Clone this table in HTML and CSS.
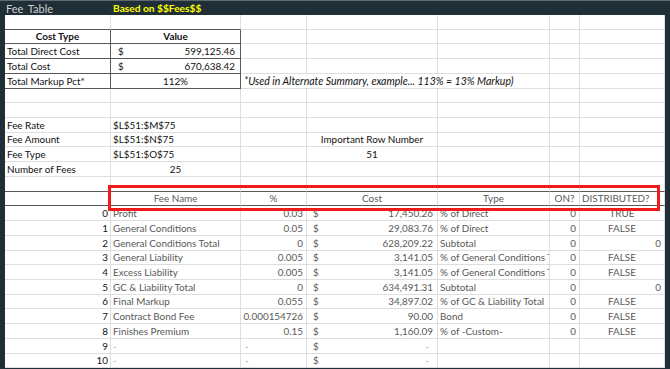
FILE: index.html
```html
<!DOCTYPE html>
<html>
<head>
<meta charset="utf-8">
<link rel="stylesheet" href="styles.css">
</head>
<body>
<div class="topbar"><span class="title">Fee Table</span><span class="based">Based on $$Fees$$</span></div>
<div class="frame">
<div class="sheet">
  <div class="row"><div class="c bbd"></div><div class="c bbd"></div><div class="c"></div><div class="c"></div><div class="c"></div><div class="c"></div><div class="c"></div></div>
  <div class="row"><div class="c box ctr b">Cost Type</div><div class="c box ctr b">Value</div><div class="c"></div><div class="c"></div><div class="c"></div><div class="c"></div><div class="c"></div></div>
  <div class="row"><div class="c box">Total Direct Cost</div><div class="c box money mb"><span>$</span><span>599,125.46</span></div><div class="c"></div><div class="c"></div><div class="c"></div><div class="c"></div><div class="c"></div></div>
  <div class="row"><div class="c box">Total Cost</div><div class="c box money mb"><span>$</span><span>670,638.42</span></div><div class="c"></div><div class="c"></div><div class="c"></div><div class="c"></div><div class="c"></div></div>
  <div class="row"><div class="c box">Total Markup Pct*</div><div class="c box ctr">112%</div><div class="c span3 it">*Used in Alternate Summary, example... 113% = 13% Markup)</div><div class="c"></div><div class="c"></div></div>
  <div class="row"><div class="c"></div><div class="c"></div><div class="c"></div><div class="c"></div><div class="c"></div><div class="c"></div><div class="c"></div></div>
  <div class="row"><div class="c"></div><div class="c"></div><div class="c"></div><div class="c"></div><div class="c"></div><div class="c"></div><div class="c"></div></div>
  <div class="row"><div class="c">Fee Rate</div><div class="c">$L$51:$M$75</div><div class="c"></div><div class="c"></div><div class="c"></div><div class="c"></div><div class="c"></div></div>
  <div class="row"><div class="c">Fee Amount</div><div class="c">$L$51:$N$75</div><div class="c"></div><div class="c ctr">Important Row Number</div><div class="c"></div><div class="c"></div><div class="c"></div></div>
  <div class="row"><div class="c">Fee Type</div><div class="c">$L$51:$O$75</div><div class="c"></div><div class="c ctr">51</div><div class="c"></div><div class="c"></div><div class="c"></div></div>
  <div class="row"><div class="c">Number of Fees</div><div class="c ctr">25</div><div class="c"></div><div class="c"></div><div class="c"></div><div class="c"></div><div class="c"></div></div>
  <div class="row"><div class="c bbd"></div><div class="c bbd"></div><div class="c bbd"></div><div class="c bbd"></div><div class="c bbd"></div><div class="c bbd"></div><div class="c bbd"></div></div>
  <div class="row head"><div class="c bbd"></div><div class="c bbd ctr">Fee Name</div><div class="c bbd ctr">%</div><div class="c bbd ctr">Cost</div><div class="c bbd ctr">Type</div><div class="c bbd ctr">ON?</div><div class="c bbd">DISTRIBUTED?</div></div>

  <div class="row data"><div class="c num">0</div><div class="c">Profit</div><div class="c r pc">0.03</div><div class="c money md"><span>$</span><span>17,450.26</span></div><div class="c">% of Direct</div><div class="c r on">0</div><div class="c ctr">TRUE</div></div>
  <div class="row data"><div class="c num">1</div><div class="c">General Conditions</div><div class="c r pc">0.05</div><div class="c money md"><span>$</span><span>29,083.76</span></div><div class="c">% of Direct</div><div class="c r on">0</div><div class="c ctr">FALSE</div></div>
  <div class="row data"><div class="c num">2</div><div class="c">General Conditions Total</div><div class="c r pc">0</div><div class="c money md"><span>$</span><span>628,209.22</span></div><div class="c">Subtotal</div><div class="c r on">0</div><div class="c r on">0</div></div>
  <div class="row data"><div class="c num">3</div><div class="c">General Liability</div><div class="c r pc">0.005</div><div class="c money md"><span>$</span><span>3,141.05</span></div><div class="c">% of General Conditions Total</div><div class="c r on">0</div><div class="c ctr">FALSE</div></div>
  <div class="row data"><div class="c num">4</div><div class="c">Excess Liability</div><div class="c r pc">0.005</div><div class="c money md"><span>$</span><span>3,141.05</span></div><div class="c">% of General Conditions Total</div><div class="c r on">0</div><div class="c ctr">FALSE</div></div>
  <div class="row data"><div class="c num">5</div><div class="c">GC &amp; Liability Total</div><div class="c r pc">0</div><div class="c money md"><span>$</span><span>634,491.31</span></div><div class="c">Subtotal</div><div class="c r on">0</div><div class="c r on">0</div></div>
  <div class="row data"><div class="c num">6</div><div class="c">Final Markup</div><div class="c r pc">0.055</div><div class="c money md"><span>$</span><span>34,897.02</span></div><div class="c">% of GC &amp; Liability Total</div><div class="c r on">0</div><div class="c ctr">FALSE</div></div>
  <div class="row data"><div class="c num">7</div><div class="c">Contract Bond Fee</div><div class="c r pc">0.000154726</div><div class="c money md"><span>$</span><span>90.00</span></div><div class="c">Bond</div><div class="c r on">0</div><div class="c ctr">FALSE</div></div>
  <div class="row data"><div class="c num">8</div><div class="c">Finishes Premium</div><div class="c r pc">0.15</div><div class="c money md"><span>$</span><span>1,160.09</span></div><div class="c">% of -Custom-</div><div class="c r on">0</div><div class="c ctr">FALSE</div></div>
  <div class="row data"><div class="c num">9</div><div class="c dash">-</div><div class="c dash dc">-</div><div class="c money md"><span>$</span><span class="dash dd">-</span></div><div class="c"></div><div class="c"></div><div class="c"></div></div>
  <div class="row data"><div class="c num">10</div><div class="c dash">-</div><div class="c dash dc">-</div><div class="c money md"><span>$</span><span class="dash dd">-</span></div><div class="c"></div><div class="c"></div><div class="c"></div></div>

  <div class="redbox"></div>
</div>
</div>
</body>
</html>
```

FILE: styles.css
```css
* { box-sizing: border-box; }

body {
  margin: 0;
  width: 670px;
  height: 369px;
  overflow: hidden;
  background: #1f2e37;
  font-family: Lato, "Liberation Sans", sans-serif;
  font-size: 9.9px;
  color: #111;
}

.topbar {
  height: 15px;
  border-top: 1px solid #5d6a71;
  display: flex;
  align-items: center;
  font-size: 10.2px;
  color: #cfcfcf;
}

.topbar .title {
  width: 113px;
  padding-left: 6px;
  font-size: 11px;
  word-spacing: 2px;
}

.topbar .based {
  color: #ffff00;
  font-weight: bold;
}

.frame {
  padding: 0 5px;
}

.sheet {
  position: relative;
  width: 660px;
  background: #fff;
}

.row {
  display: grid;
  grid-template-columns: 106px 130px 66px 131px 112px 30px 85px;
  height: 14.73px;
}

.c {
  display: flex;
  align-items: flex-end;
  padding: 0 2px 0 2px;
  border-right: 1px solid #dedede;
  border-bottom: 1px solid #dedede;
  white-space: nowrap;
  overflow: hidden;
  line-height: 13px;
}

.span3 {
  grid-column: span 3;
  overflow: visible;
}

.box {
  border-right-color: #595959;
  border-bottom-color: #595959;
}

.bbd {
  border-bottom-color: #595959;
}

.b { font-weight: bold; }
.it { font-style: italic; padding-left: 3px; font-size: 10.5px; }

.ctr { justify-content: center; }
.r { justify-content: flex-end; }

.money {
  justify-content: space-between;
}

.mb { padding-left: 7px; padding-right: 5px; }
.md { padding-left: 6px; padding-right: 4px; }

.head .c { color: #595959; }

.data .c { color: #595959; }
.data .num { justify-content: flex-end; color: #111; padding-right: 2px; }
.pc { padding-right: 3px; }
.on { padding-right: 3px; }

.data .dash { color: #a6a6a6; }
.dc { padding-left: 4px; }
.dd { padding-right: 4px; }

.redbox {
  position: absolute;
  left: 103px;
  top: 170px;
  width: 552px;
  height: 26px;
  border: 3px solid #ee1c1c;
}
```
